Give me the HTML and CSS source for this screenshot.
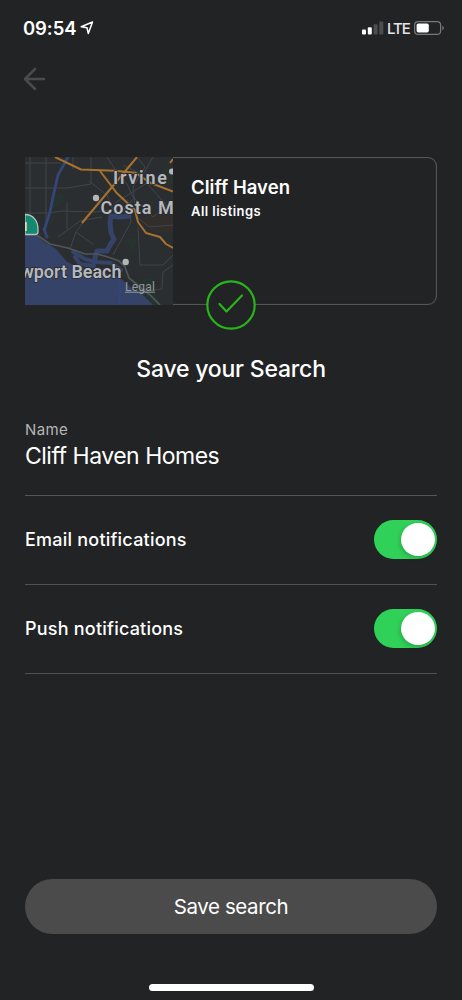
FILE: index.html
```html
<!DOCTYPE html>
<html lang="en">
<head>
<meta charset="utf-8">
<title>Save your Search</title>
<link rel="stylesheet" href="styles.css">
</head>
<body>
<div class="screen">
  <header class="status">
    <span class="time">09:54</span>
    <svg class="locate" width="14" height="14" viewBox="0 0 14 14"><path d="M1.200 5.700 12.500 1 8.300 12.500 7 6.800Z" fill="none" stroke="#fff" stroke-width="1.500" stroke-linejoin="round"/></svg>
    <svg class="signal" width="22" height="14" viewBox="0 0 22 14"><rect x="0" y="8.500" width="4" height="5" rx="1" fill="#fff"/><rect x="5.800" y="6.300" width="4" height="7.200" rx="1" fill="#fff"/><rect x="11.600" y="3.200" width="4" height="10.300" rx="1" fill="#4d4e4f"/><rect x="17.300" y=".5" width="4" height="13" rx="1" fill="#4d4e4f"/></svg>
    <span class="network">LTE</span>
    <svg class="battery" width="31" height="14" viewBox="0 0 31 14"><rect x=".6" y=".6" width="26" height="12.800" rx="3.500" fill="none" stroke="#77787a" stroke-width="1.200"/><rect x="2.600" y="2.500" width="12.200" height="9" rx="1.700" fill="#fff"/><path d="M28.300 4.800C30.300 5.500 30.300 8.500 28.300 9.200Z" fill="#77787a"/></svg>
  </header>

  <nav class="nav">
    <svg width="24" height="24" viewBox="0 0 24 24"><path d="M21 12H2M12 2 2 12l10 10" fill="none" stroke="#4b4b4c" stroke-width="2.500" stroke-linecap="round" stroke-linejoin="round"/></svg>
  </nav>

  <section class="card">
    <svg class="map" width="148" height="148" viewBox="0 0 148 148">
      <rect width="148" height="148" fill="#2b2e30"/>
      <path d="M118 60 148 52V76L130 76 120 69Z" fill="#322e2c"/>
      <path d="M30 38 38 36 39 44 25 54ZM27 56 30 63 23 66ZM99 83 112 80 110 96ZM136 12 148 10V28L138 25ZM106 126 128 120 132 138 136 148H126Z" fill="#26332f"/>
      <g fill="none" stroke="#414547" stroke-width="1">
        <path d="M0 6H36M0 31H42L66 27V0M0 56H24L36 54 70 55 84 53M5 0V70M21 0V66M42 46V72M33 80 55 64 77 60M48 0V12"/>
        <path d="M82 0 91 14 102 27 108 40 128 60 148 44M112 0 120 10 108 30 110 50M98 8 118 18 128 0M90 46 122 26 148 56M64 24 82 38 88 53M110 40 96 56"/>
        <path d="M45 92 51 75 62 60M51 75 68 87M88 98 106 65 104 50M113 70 115 108H138L148 98M148 108 138 115 137 132 122 134M112 60 124 70 148 68"/>
      </g>
      <path d="M0 78H12L18 84 31 92 42 105 57 111 94 120 105 130 116 136 128 148H0Z" fill="#354368"/>
      <g fill="none" stroke="#354368" stroke-linejoin="round" stroke-linecap="round">
        <path d="M104 59 95 60 86 59 85 65 86 76 89 82 85 88 82 94 72 94 69 105" stroke-width="5"/>
        <path d="M48 95 60 102 70 105 86 106 96 113M50 100 55 107 69 109" stroke-width="4"/>
        <path d="M19 72 22 80" stroke-width="3"/>
      </g>
      <path d="M12 78 25 87 43 91 60 97H72L83 100 94 104 100 110 104 121 110 126 125 138 135 148" fill="none" stroke="#505558" stroke-width="1.700"/>
      <path d="M43 0 33 18 28 40 25 55 19 74" fill="none" stroke="#34477a" stroke-width="2.700"/>
      <path d="M93 119 95 134 94 148" fill="none" stroke="#34477a" stroke-width="1.400"/>
      <g fill="none" stroke="#a9712e" stroke-width="2" stroke-linejoin="round">
        <path d="M30 0 56 12.500 90 13.700 110 15.700 125 25.700 148 34.500"/>
        <path d="M112 0 57 66"/>
        <path d="M75 14 91.700 36 110 53 113 65 121 76 135 80 141 87 148 91M145 6 148 2"/>
      </g>
      <path d="M0 57.500C9 57.500 13 65 13 72V75Q13 77.500 10 77.500H0Z" fill="#118a70" stroke="#b9c1bd" stroke-width="1.300"/>
      <text x="-3.500" y="73.500" class="shield">1</text>
      <g fill="#b3b6b9"><circle cx="71" cy="41" r="3.200"/><circle cx="100.700" cy="105" r="3.200"/><circle cx="147" cy="14.500" r="3"/></g>
      <g class="places"><text x="88" y="27" textLength="54">Irvine</text><text x="75.500" y="57" textLength="84">Costa Me</text><text x="-4.500" y="120.500" textLength="101">wport Beach</text></g>
      <text x="100" y="133.500" textLength="30" class="legal">Legal</text><path d="M100 135.200H130" stroke="#94989f" stroke-width="1"/>
    </svg>
    <div class="details">
      <h2 class="place">Cliff Haven</h2>
      <p class="filter">All listings</p>
    </div>
    <svg class="check" width="50" height="50" viewBox="0 0 50 50"><circle cx="25" cy="25" r="23.700" fill="#222325" stroke="#29b41b" stroke-width="2.200"/><path d="M13.500 24 20.500 31.500 36 15.500" fill="none" stroke="#29b41b" stroke-width="2.200" stroke-linecap="round" stroke-linejoin="round"/></svg>
  </section>

  <h1 class="title">Save your Search</h1>

  <main class="form">
    <div class="field"><label class="label">Name</label><span class="value">Cliff Haven Homes</span></div>
    <div class="row"><span>Email notifications</span><span class="toggle"><span class="knob"></span></span></div>
    <div class="row"><span>Push notifications</span><span class="toggle"><span class="knob"></span></span></div>
  </main>

  <footer class="footer">
    <button class="save">Save search</button>
    <div class="home"></div>
  </footer>
</div>
</body>
</html>
```
FILE: styles.css
```css
* { box-sizing: border-box; }
body { margin: 0; background: #222325; color: #fff; font-family: Inter, "Liberation Sans", sans-serif; }
h1, h2, p { margin: 0; }
svg { display: block; flex: none; }
.screen { width: 462px; height: 1000px; display: flex; flex-direction: column; overflow: hidden; }
.status { height: 56px; padding: 0 18px 0 23px; display: flex; align-items: center; }
.time { font-size: 18.5px; font-weight: 600; width: 57px; letter-spacing: -.1px; white-space: nowrap; }
.signal { margin-left: auto; }
.network { font-size: 15px; font-weight: 500; width: 22px; margin: 0 5px 0 3px; letter-spacing: -1px; color: #e4e5e6; }
.battery { margin-right: -1px; }
.nav { height: 101px; padding: 11px 23px; }
.card { position: relative; height: 148px; margin: 0 25px; display: flex; border: 1px solid #555657; border-left: 0; border-radius: 0 9px 9px 0; box-shadow: inset 0 0 1px #555657; }
.map { margin-top: -1px; }
.shield { font: 700 13px Roboto, sans-serif; fill: #d3dfda; }
.places { font: 600 18px Roboto, sans-serif; fill: #b5b8bd; stroke: #292c2f; stroke-width: 1.5px; paint-order: stroke; }
.legal { font: 400 12px Roboto, sans-serif; fill: #94989f; }
.details { padding: 17px 0 0 18px; }
.place { font-size: 18.5px; line-height: 24px; font-weight: 600; letter-spacing: .05px; }
.filter { font-size: 13px; line-height: 18px; margin-top: 3px; font-weight: 600; letter-spacing: .45px; }
.check { position: absolute; left: 181px; bottom: -26px; }
.title { margin-top: 48px; font-size: 23px; line-height: 32px; font-weight: 500; text-align: center; letter-spacing: -.2px; }
.form { margin: 35px 25px 0; }
.field { height: 76px; border-bottom: 1px solid #555657; display: flex; flex-direction: column; }
.label { font-size: 15px; line-height: 20px; color: #b5b6b7; letter-spacing: .4px; }
.value { font-size: 23px; line-height: 32px; letter-spacing: -.5px; }
.row { height: 89px; padding-bottom: 1px; border-bottom: 1px solid #505152; display: flex; align-items: center; justify-content: space-between; font-size: 18px; font-weight: 500; letter-spacing: .22px; }
.toggle { width: 63px; height: 39px; padding: 3px 2px 3px 0; border-radius: 20px; background: #30d158; display: flex; justify-content: flex-end; }
.knob { width: 34px; height: 33px; border-radius: 50%; background: #fff; box-shadow: -1px 2px 5px #0003; }
.footer { margin-top: auto; padding: 0 25px 9px; display: flex; flex-direction: column; align-items: center; gap: 50px; }
.save { width: 100%; height: 55px; padding: 0; border: 0; border-radius: 28px; background: #4b4b4b; color: #fff; font: 400 20.5px Inter, sans-serif; letter-spacing: -.4px; }
.home { width: 165px; height: 7px; border-radius: 4px; background: #fff; }
```
